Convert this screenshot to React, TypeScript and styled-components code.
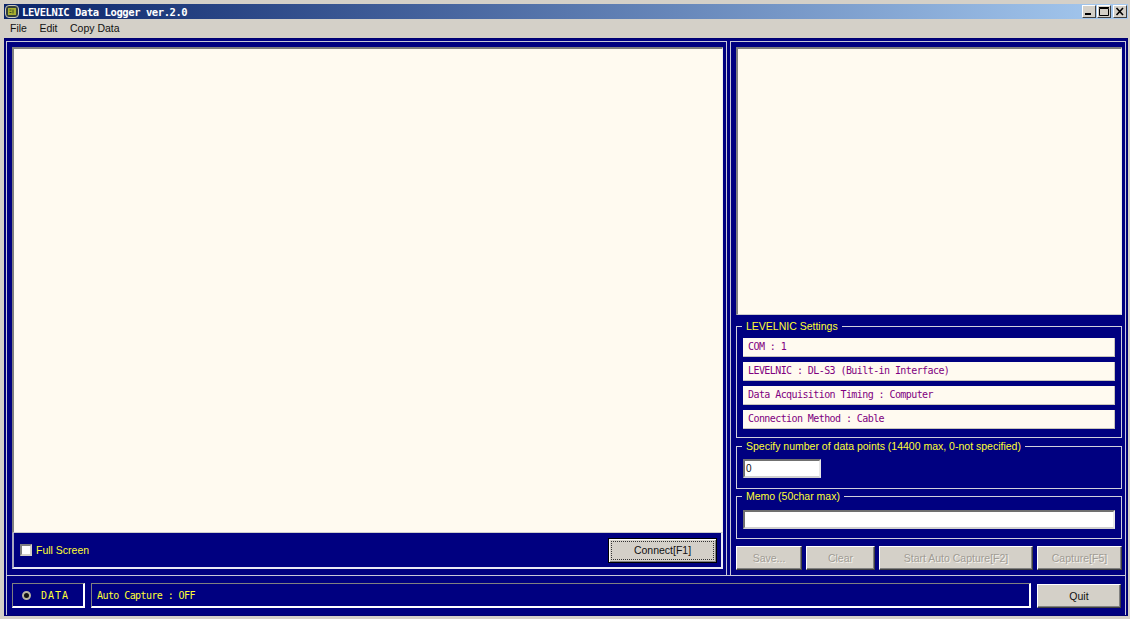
import styled, { createGlobalStyle } from "styled-components";
import { useState } from "react";

const GlobalStyle = createGlobalStyle`
  html, body {
    margin: 0;
    padding: 0;
    background: #d4d0c8;
  }
  * {
    box-sizing: border-box;
  }
`;

const uiFont = `"Liberation Sans", Arial, sans-serif`;
const monoFont = `"DejaVu Sans Mono", "Liberation Mono", monospace`;

const Window = styled.div`
  width: 1130px;
  height: 619px;
  padding: 4px 2px 3px 4px;
  background: #d4d0c8;
  display: flex;
  flex-direction: column;
  overflow: hidden;
  font-family: ${uiFont};
`;

const TitleBar = styled.div`
  height: 15px;
  flex: none;
  background: linear-gradient(90deg, #0a246a 0%, #a6caf0 100%);
  display: flex;
  align-items: center;
  padding: 0 1px 0 1px;
`;

const TitleText = styled.span`
  margin-left: 3px;
  color: #fff;
  font: bold 10.5px ${monoFont};
  letter-spacing: -0.42px;
`;

const TitleButtons = styled.div`
  margin-left: auto;
  display: flex;
`;

const CaptionButton = styled.div<{ $gap?: number }>`
  width: 14px;
  height: 13px;
  margin-left: ${(p) => p.$gap ?? 0}px;
  background: #d4d0c8;
  border: 1px solid;
  border-color: #fff #404040 #404040 #fff;
  display: flex;
  align-items: center;
  justify-content: center;
`;

const MenuBar = styled.div`
  height: 19px;
  flex: none;
  display: flex;
  align-items: center;
  gap: 12.5px;
  padding: 0 0 2px 6px;
  font-size: 10.5px;
  color: #111;
`;

const Client = styled.div`
  flex: 1;
  min-height: 0;
  background: #000080;
  padding: 2px 1px 0;
  display: flex;
  flex-direction: column;
  border: 1px solid #000070;
`;

const Upper = styled.div`
  flex: 1;
  min-height: 0;
  display: flex;
  gap: 3px;
`;

const LeftPane = styled.div`
  width: 721px;
  border: 1px solid #c8c8d8;
  border-bottom: none;
  padding: 5px 3px 6px 5px;
  display: flex;
  flex-direction: column;
`;

const Sheet = styled.div<{ $height?: number }>`
  flex: ${(p) => (p.$height ? "none" : 1)};
  height: ${(p) => (p.$height ? `${p.$height}px` : "auto")};
  background: #fffaf0;
  border-top: 2px solid #808080;
  border-left: 2px solid #808080;
  border-right: 1px solid #eee;
  border-bottom: 1px solid #ccc;
`;

const GraphFooter = styled.div`
  height: 36px;
  flex: none;
  display: flex;
  align-items: center;
  justify-content: space-between;
  padding: 0 4px 0 6px;
  border: 2px solid #e8e8f4;
  border-top: none;
  border-left-color: #a8a8c0;
`;

const CheckRow = styled.label`
  display: flex;
  align-items: center;
  gap: 4px;
  color: #ffff33;
  font-size: 10.5px;
`;

const CheckBox = styled.span`
  width: 12px;
  height: 12px;
  background: #fff;
  border: 2px solid;
  border-color: #808080 #d4d0c8 #d4d0c8 #808080;
`;

const Button = styled.button<{ $width: number; $focused?: boolean }>`
  width: ${(p) => p.$width}px;
  height: ${(p) => (p.$focused ? 25 : 24)}px;
  flex: none;
  padding: 0;
  background: #d4d0c8;
  font: 10.5px ${uiFont};
  color: #111;
  border: 1px solid;
  border-color: #fff #404040 #404040 #fff;
  box-shadow: inset -1px -1px 0 #808080;
  ${(p) =>
    p.$focused &&
    `
    border: 1px solid #000;
    box-shadow: inset 1px 1px 0 #fff, inset -1px -1px 0 #808080;
    outline: 1px dotted #333;
    outline-offset: -4px;
  `}
  &:disabled {
    color: #a09c94;
    text-shadow: 1px 1px 0 #f4f2ee;
  }
`;

const RightPane = styled.div`
  flex: 1;
  border: 1px solid #c8c8d8;
  border-bottom: none;
  padding: 5px 3px 3px 5px;
  display: flex;
  flex-direction: column;
`;

const GroupBox = styled.fieldset<{ $height: number; $gap: number; $inset: number }>`
  margin: ${(p) => p.$gap}px 0 0;
  padding: ${(p) => p.$inset}px 6px 0;
  height: ${(p) => p.$height}px;
  flex: none;
  min-width: 0;
  border: 1px solid #d0d0dc;
  display: flex;
  flex-direction: column;
  gap: 5px;
`;

const Legend = styled.legend`
  margin-left: -1px;
  padding: 0 4px;
  color: #ffff33;
  font-size: 10.5px;
  line-height: 12px;
`;

const InfoRow = styled.div`
  height: 19px;
  flex: none;
  background: #fffaf0;
  color: #800080;
  font: 10px/18px ${monoFont};
  letter-spacing: -0.58px;
  padding-left: 5px;
  border-bottom: 1px solid #c8c4bc;
  border-right: 1px solid #c8c4bc;
`;

const TextField = styled.input<{ $width?: number }>`
  width: ${(p) => (p.$width ? `${p.$width}px` : "100%")};
  height: 19px;
  flex: none;
  padding: 0 1px;
  background: #fff;
  color: #111;
  font: 10px ${uiFont};
  border: 2px solid;
  border-color: #707070 #e8e8e8 #d0d0d0 #707070;
  outline: none;
`;

const ButtonRow = styled.div`
  display: flex;
  gap: 4px;
  margin-top: 7px;
`;

const StatusBar = styled.div`
  height: 40px;
  flex: none;
  border: 1px solid #c8c8d8;
  border-bottom: none;
  display: flex;
  align-items: center;
  gap: 6px;
  padding: 0 4px 0 5px;
`;

const StatusCell = styled.div<{ $width?: number }>`
  height: 25px;
  width: ${(p) => (p.$width ? `${p.$width}px` : "auto")};
  flex: ${(p) => (p.$width ? "none" : 1)};
  border: 1px solid;
  border-color: #808080 #fff #fff #808080;
  border-width: 1px 2px 2px 1px;
  color: #ffff33;
  display: flex;
  align-items: center;
  font-family: ${monoFont};
  font-size: 10px;
  letter-spacing: -0.58px;
  padding-left: 5px;
`;

const Lamp = styled.span`
  width: 9px;
  height: 9px;
  border-radius: 50%;
  border: 2px solid #b8b4a0;
  background: #111;
  margin: 0 10px 0 4px;
`;

const DataLabel = styled.span`
  letter-spacing: 1px;
`;

function AppIcon() {
  return (
    <svg width="14" height="13" viewBox="0 0 14 13">
      <rect x="0.5" y="0.5" width="13" height="12" rx="3.5" fill="#34403a" stroke="#c8c8c0" />
      <rect x="3" y="3" width="8" height="7" fill="#a8b030" />
      <path d="M4.5 5h2M4.5 7.5h2M8 4.5v4" stroke="#3a4a20" />
    </svg>
  );
}

function CaptionGlyph({ kind }: { kind: "min" | "max" | "close" }) {
  return (
    <svg width="10" height="9" viewBox="0 0 10 9">
      {kind === "min" && <rect x="1" y="6" width="6" height="2" fill="#000" />}
      {kind === "max" && <path d="M0.5 1.5h9v7h-9zM0 0.5h10" fill="none" stroke="#000" />}
      {kind === "close" && <path d="M1.5 1l6.5 7M8 1L1.5 8" stroke="#000" strokeWidth="1.6" />}
    </svg>
  );
}

const settings = [
  "COM : 1",
  "LEVELNIC : DL-S3 (Built-in Interface)",
  "Data Acquisition Timing : Computer",
  "Connection Method : Cable",
];

export default function App() {
  const [points, setPoints] = useState("0");
  const [memo, setMemo] = useState("");

  return (
    <>
      <GlobalStyle />
      <Window>
        <TitleBar>
          <AppIcon />
          <TitleText>LEVELNIC Data Logger ver.2.0</TitleText>
          <TitleButtons>
            <CaptionButton><CaptionGlyph kind="min" /></CaptionButton>
            <CaptionButton $gap={1}><CaptionGlyph kind="max" /></CaptionButton>
            <CaptionButton $gap={2}><CaptionGlyph kind="close" /></CaptionButton>
          </TitleButtons>
        </TitleBar>
        <MenuBar>
          <span>File</span>
          <span>Edit</span>
          <span>Copy Data</span>
        </MenuBar>
        <Client>
          <Upper>
            <LeftPane>
              <Sheet />
              <GraphFooter>
                <CheckRow>
                  <CheckBox />
                  Full Screen
                </CheckRow>
                <Button $width={109} $focused>Connect[F1]</Button>
              </GraphFooter>
            </LeftPane>
            <RightPane>
              <Sheet $height={268} />
              <GroupBox $height={118} $gap={5} $inset={6}>
                <Legend>LEVELNIC Settings</Legend>
                {settings.map((s) => (
                  <InfoRow key={s}>{s}</InfoRow>
                ))}
              </GroupBox>
              <GroupBox $height={49} $gap={2} $inset={7}>
                <Legend>Specify number of data points (14400 max, 0-not specified)</Legend>
                <TextField $width={78} value={points} onChange={(e) => setPoints(e.target.value)} />
              </GroupBox>
              <GroupBox $height={49} $gap={1} $inset={8}>
                <Legend>Memo (50char max)</Legend>
                <TextField value={memo} onChange={(e) => setMemo(e.target.value)} />
              </GroupBox>
              <ButtonRow>
                <Button $width={66} disabled>Save...</Button>
                <Button $width={69} disabled>Clear</Button>
                <Button $width={154} disabled>Start Auto Capture[F2]</Button>
                <Button $width={85} disabled>Capture[F5]</Button>
              </ButtonRow>
            </RightPane>
          </Upper>
          <StatusBar>
            <StatusCell $width={73}>
              <Lamp />
              <DataLabel>DATA</DataLabel>
            </StatusCell>
            <StatusCell>Auto Capture : OFF</StatusCell>
            <Button $width={84}>Quit</Button>
          </StatusBar>
        </Client>
      </Window>
    </>
  );
}
